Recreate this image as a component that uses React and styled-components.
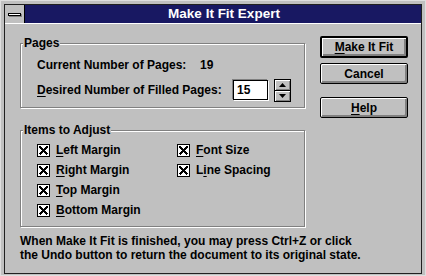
import styled, { createGlobalStyle } from "styled-components";

const GlobalStyle = createGlobalStyle`
  html, body {
    margin: 0;
    padding: 0;
    background: #c0c0c0;
  }
  body {
    font-family: "Liberation Sans", Arial, sans-serif;
  }
`;

const Window = styled.div`
  width: 426px;
  height: 276px;
  box-sizing: border-box;
  background: #c0c0c0;
  border: 1px solid #dfdfdf;
  padding: 3px 3px 1px;
  display: flex;
`;

const Frame = styled.div`
  flex: 1;
  border: 1px solid #202020;
  display: flex;
  flex-direction: column;
  font: bold 12px "Liberation Sans", Arial, sans-serif;
  color: #000;
`;

const TitleBar = styled.div`
  height: 18px;
  display: flex;
  border-bottom: 1px solid #fff;
`;

const SysMenu = styled.div`
  width: 19px;
  border-right: 1px solid #000;
  background: #c0c0c0;
  display: flex;
  align-items: center;
  justify-content: center;
  span {
    display: block;
    width: 11px;
    height: 1px;
    background: #fff;
    border: 1px solid #000;
    box-shadow: 1px 1px 0 #808080;
  }
`;

const Caption = styled.div`
  flex: 1;
  background: #181862;
  color: #fff;
  font-size: 13.5px;
  line-height: 18px;
  text-align: center;
  padding-left: 2px;
`;

const Body = styled.div`
  flex: 1;
  padding: 12px 0 0 15px;
  display: flex;
  flex-direction: column;
`;

const TopRow = styled.div`
  display: flex;
  gap: 15px;
`;

const LeftCol = styled.div`
  width: 285px;
  display: flex;
  flex-direction: column;
`;

const GroupBox = styled.div`
  position: relative;
  margin-top: ${(p) => p.$mt}px;
  border: 1px solid #808080;
  box-shadow: inset 1px 1px 0 #fff, 1px 1px 0 #fff;
  padding: ${(p) => p.$pad};
`;

const Legend = styled.div`
  position: absolute;
  top: -8px;
  left: 2px;
  padding: 0 1px;
  background: #c0c0c0;
  line-height: 14px;
`;

const FieldRow = styled.div`
  display: flex;
  align-items: center;
  height: ${(p) => p.$h}px;
  margin-top: ${(p) => p.$mt || 0}px;
`;

const FieldLabel = styled.div`
  width: ${(p) => p.$w}px;
  line-height: 14px;
`;

const NumberBox = styled.div`
  width: 35px;
  height: 20px;
  box-sizing: border-box;
  background: #fff;
  border: 1px solid #000;
  box-shadow: -1px -1px 0 #808080, 1px 1px 0 #fff;
  padding-left: 3px;
  line-height: 18px;
`;

const Spinner = styled.div`
  width: 17px;
  height: 23px;
  box-sizing: border-box;
  margin-left: 6px;
  border: 1px solid #000;
  display: flex;
  flex-direction: column;
  background: #000;
  gap: 1px;
`;

const SpinHalf = styled.div`
  flex: 1;
  background: #c0c0c0;
  box-shadow: inset 1px 1px 0 #fff, inset -1px -1px 0 #808080;
  display: flex;
  align-items: center;
  justify-content: center;
`;

const ChecksGrid = styled.div`
  display: grid;
  grid-template-columns: 140px 1fr;
  grid-template-rows: repeat(4, 20px);
  grid-auto-flow: column;
`;

const CheckItem = styled.label`
  display: flex;
  align-items: center;
  gap: 6px;
  line-height: 14px;
`;

const Mn = styled.u`
  text-decoration: underline;
  text-underline-offset: 2px;
`;

const ButtonCol = styled.div`
  display: flex;
  flex-direction: column;
`;

const Button = styled.button`
  width: 88px;
  height: ${(p) => (p.$default ? 22 : 21)}px;
  margin-top: ${(p) => p.$mt}px;
  box-sizing: border-box;
  padding: 0;
  border: ${(p) => (p.$default ? 2 : 1)}px solid #000;
  border-radius: 2px;
  background: #c0c0c0;
  box-shadow: inset 1px 1px 0 #fff, inset -1px -1px 0 #808080,
    inset -2px -2px 0 #808080;
  font: bold 12px "Liberation Sans", Arial, sans-serif;
  color: #000;
  line-height: 14px;
`;

const Note = styled.p`
  margin: 7px 0 0;
  line-height: 14px;
`;

const CheckBox = () => (
  <svg width="13" height="13" viewBox="0 0 13 13" shapeRendering="crispEdges">
    <rect x="0.5" y="0.5" width="12" height="12" fill="#fff" stroke="#000" />
    <path d="M2.5 2.5 L10.5 10.5 M10.5 2.5 L2.5 10.5" stroke="#000" strokeWidth="1.8" />
  </svg>
);

const Arrow = ({ up }) => (
  <svg width="7" height="4" viewBox="0 0 7 4">
    <path d={up ? "M3.5 0 L7 4 L0 4 Z" : "M0 0 L7 0 L3.5 4 Z"} fill="#000" />
  </svg>
);

const checks = [
  <><Mn>L</Mn>eft Margin</>,
  <><Mn>R</Mn>ight Margin</>,
  <><Mn>T</Mn>op Margin</>,
  <><Mn>B</Mn>ottom Margin</>,
  <><Mn>F</Mn>ont Size</>,
  <>L<Mn>i</Mn>ne Spacing</>,
];

const App = () => (
  <>
    <GlobalStyle />
    <Window>
      <Frame>
        <TitleBar>
          <SysMenu>
            <span />
          </SysMenu>
          <Caption>Make It Fit Expert</Caption>
        </TitleBar>
        <Body>
          <TopRow>
            <LeftCol>
              <GroupBox $mt={7} $pad="11px 0 6px 16px">
                <Legend>Pages</Legend>
                <FieldRow $h={20}>
                  <FieldLabel $w={163}>Current Number of Pages:</FieldLabel>
                  <span>19</span>
                </FieldRow>
                <FieldRow $h={22} $mt={4}>
                  <FieldLabel $w={196}>
                    <Mn>D</Mn>esired Number of Filled Pages:
                  </FieldLabel>
                  <NumberBox>15</NumberBox>
                  <Spinner>
                    <SpinHalf>
                      <Arrow up />
                    </SpinHalf>
                    <SpinHalf>
                      <Arrow />
                    </SpinHalf>
                  </Spinner>
                </FieldRow>
              </GroupBox>
              <GroupBox $mt={22} $pad="9px 0 6px 16px">
                <Legend>Items to Adjust</Legend>
                <ChecksGrid>
                  {checks.map((label, i) => (
                    <CheckItem key={i}>
                      <CheckBox />
                      <span>{label}</span>
                    </CheckItem>
                  ))}
                </ChecksGrid>
              </GroupBox>
            </LeftCol>
            <ButtonCol>
              <Button $default $mt={0}>
                <Mn>M</Mn>ake It Fit
              </Button>
              <Button $mt={5}>Cancel</Button>
              <Button $mt={13}>
                <Mn>H</Mn>elp
              </Button>
            </ButtonCol>
          </TopRow>
          <Note>
            When Make It Fit is finished, you may press Ctrl+Z or click
            <br />
            the Undo button to return the document to its original state.
          </Note>
        </Body>
      </Frame>
    </Window>
  </>
);

export default App;
